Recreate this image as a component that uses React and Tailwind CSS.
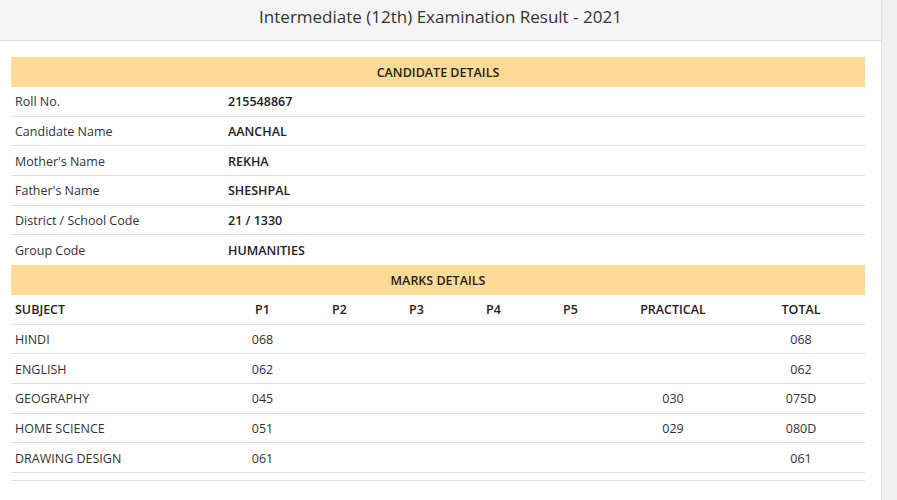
import React from 'react';

const candidate = [
  ['Roll No.', '215548867'],
  ['Candidate Name', 'AANCHAL'],
  ["Mother's Name", 'REKHA'],
  ["Father's Name", 'SHESHPAL'],
  ['District / School Code', '21 / 1330'],
  ['Group Code', 'HUMANITIES'],
];

const marks = [
  ['HINDI', '068', '', '', '', '', '', '068'],
  ['ENGLISH', '062', '', '', '', '', '', '062'],
  ['GEOGRAPHY', '045', '', '', '', '', '030', '075D'],
  ['HOME SCIENCE', '051', '', '', '', '', '029', '080D'],
  ['DRAWING DESIGN', '061', '', '', '', '', '', '061'],
];

const heads = ['SUBJECT', 'P1', 'P2', 'P3', 'P4', 'P5', 'PRACTICAL', 'TOTAL'];

const gridCols = 'grid grid-cols-[213px_77px_77px_77px_77px_77px_128px_1fr]';

const Band = ({ children }) => (
  <div className="h-[30px] bg-[#fddb96] flex items-center justify-center pt-[2px] text-[12.5px] font-semibold text-[#222]">
    {children}
  </div>
);

export default function App() {
  return (
    <div className="w-[897px] h-[500px] flex bg-white overflow-hidden text-[#333]" style={{ fontFamily: '"Open Sans", "Noto Sans", sans-serif' }}>
      <div className="w-[881px] flex flex-col">
        {/* header */}
        <div className="h-[41px] bg-[#f5f5f5] border-b border-[#dcdcdc] flex items-center justify-center text-[17px] text-[#333] pb-[7px]">
          Intermediate (12th) Examination Result - 2021
        </div>

        <div className="pl-[11px] pr-[16px] pt-[16px]">
          <Band>CANDIDATE DETAILS</Band>
          {candidate.map(([label, value], i) => (
            <div
              key={label}
              className={`h-[29.67px] flex items-center pt-[3px] text-[12.5px] ${i < candidate.length - 1 ? 'border-b border-[#e0e0e0]' : ''}`}
            >
              <div className="w-[213px] pl-[4px]">{label}</div>
              <div className="pl-[4px] font-semibold text-[#222]">{value}</div>
            </div>
          ))}

          <Band>MARKS DETAILS</Band>
          <div className={`${gridCols} h-[29.67px] items-center pt-[3px] border-b border-[#e0e0e0] text-[12.5px] font-semibold text-[#222]`}>
            {heads.map((h, i) => (
              <div key={h} className={i === 0 ? 'pl-[4px]' : 'text-center'}>{h}</div>
            ))}
          </div>
          {marks.map((row) => (
            <div key={row[0]} className={`${gridCols} h-[29.67px] items-center pt-[3px] border-b border-[#e0e0e0] text-[12.5px]`}>
              {row.map((c, i) => (
                <div key={i} className={i === 0 ? 'pl-[4px]' : 'text-center'}>{c}</div>
              ))}
            </div>
          ))}
          <div className="h-[8px] border-b border-[#e0e0e0]" />
        </div>
      </div>
      <div className="flex-1 bg-[#f0f0f0] border-l border-[#e2e2e2]" />
    </div>
  );
}
